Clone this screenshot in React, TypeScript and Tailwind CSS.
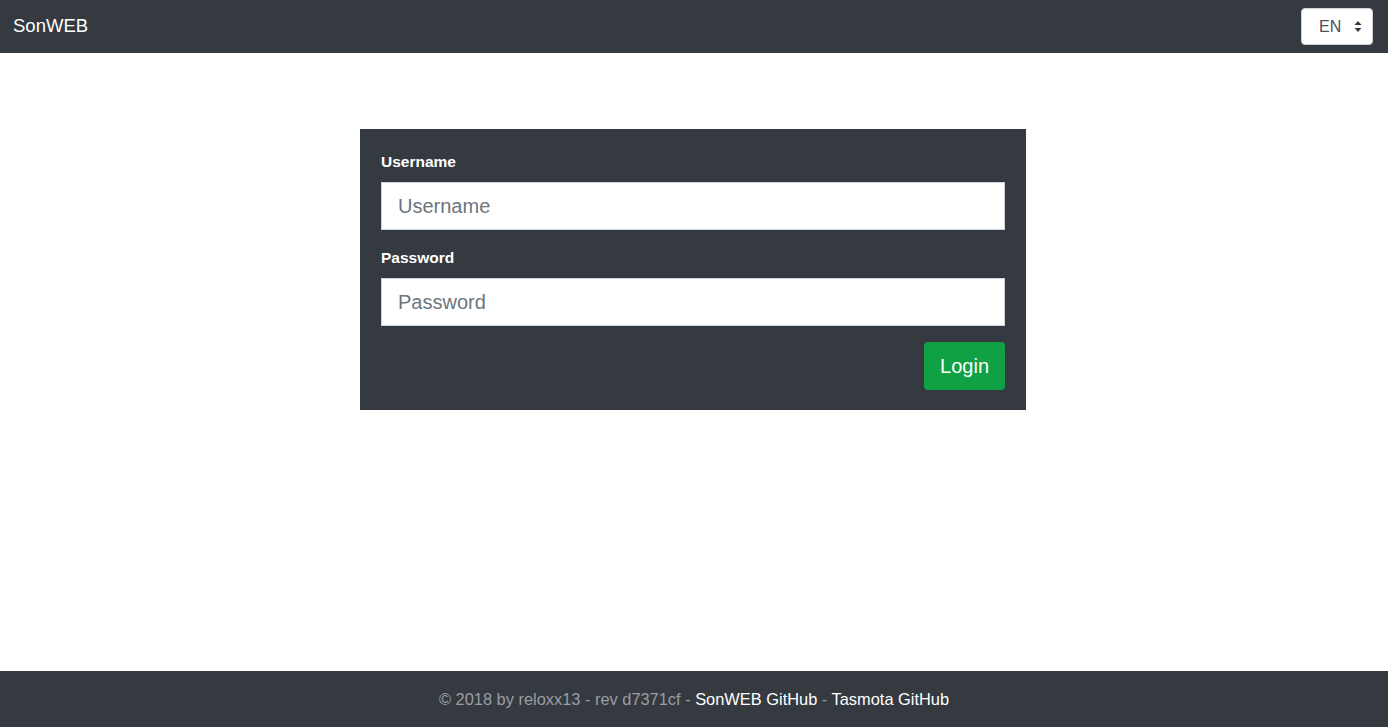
export default function App() {
  return (
    <div
      className="flex h-screen flex-col bg-white"
      style={{ fontFamily: '"Liberation Sans", Arial, sans-serif' }}
    >
      {/* Navbar */}
      <nav className="flex h-[53px] shrink-0 items-center justify-between bg-[#343a40] pl-[13px] pr-[15px]">
        <span className="text-[18.5px] leading-none text-white">SonWEB</span>
        <div className="flex h-[37px] w-[72px] items-center justify-between rounded-[4px] border border-[#ced4da] bg-white pl-[17px] pr-[10px]">
          <span className="text-[16px] text-[#495057]">EN</span>
          <svg width="8" height="11" viewBox="0 0 8 11" fill="#343a40">
            <path d="M4 0 L7.5 4 L0.5 4 Z" />
            <path d="M4 11 L7.5 7 L0.5 7 Z" />
          </svg>
        </div>
      </nav>

      {/* Main */}
      <main className="flex flex-1 justify-center pr-[2px] pt-[76px]">
        <form className="h-fit w-[666px] bg-[#343a40] px-[21px] pb-[20px] pt-[21px]">
          <div className="mb-4">
            <label className="mb-2 block text-[15.5px] font-bold leading-6 text-white">
              Username
            </label>
            <input
              type="text"
              placeholder="Username"
              className="block h-[48px] w-full rounded-none border border-[#ced4da] bg-white px-4 text-[20px] text-[#495057] placeholder-[#6c757d] outline-none"
            />
          </div>
          <div className="mb-4">
            <label className="mb-2 block text-[15.5px] font-bold leading-6 text-white">
              Password
            </label>
            <input
              type="password"
              placeholder="Password"
              className="block h-[48px] w-full rounded-none border border-[#ced4da] bg-white px-4 text-[20px] text-[#495057] placeholder-[#6c757d] outline-none"
            />
          </div>
          <div className="flex justify-end">
            <button
              type="submit"
              className="h-[48px] rounded-[4px] bg-[#0fa143] px-4 text-[20px] text-white"
            >
              Login
            </button>
          </div>
        </form>
      </main>

      {/* Footer */}
      <footer className="flex h-[56px] shrink-0 items-center justify-center bg-[#343a40] text-[16.4px] text-[#9a9ea3]">
        <span>
          © 2018 by reloxx13 - rev d7371cf -{" "}
          <a className="text-white">SonWEB GitHub</a> -{" "}
          <a className="text-white">Tasmota GitHub</a>
        </span>
      </footer>
    </div>
  );
}
